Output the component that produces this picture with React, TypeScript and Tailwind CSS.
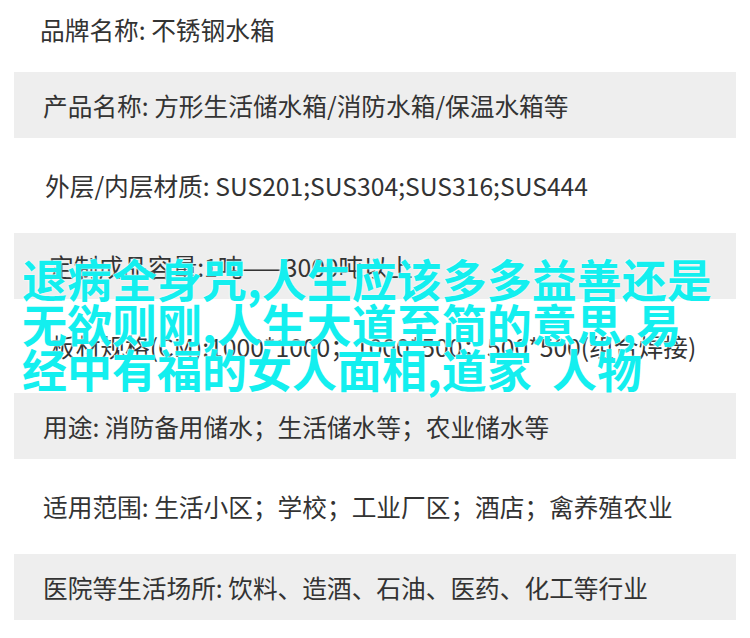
const rows: { text: string; shaded: boolean; indent: string; height: string }[] = [
  { text: "品牌名称: 不锈钢水箱", shaded: false, indent: "pl-[26px]", height: "h-[58px]" },
  { text: "产品名称: 方形生活储水箱/消防水箱/保温水箱等", shaded: true, indent: "pl-[29px]", height: "h-[66px]" },
  { text: "外层/内层材质: SUS201;SUS304;SUS316;SUS444", shaded: false, indent: "pl-[31px]", height: "h-[66px]" },
  { text: "定制成品容量:1吨——3000吨以上", shaded: true, indent: "pl-[35px]", height: "h-[66px]" },
  { text: "板材规格(CM):1000*1000；1000*500；500*500(组合焊接)", shaded: false, indent: "pl-[37px]", height: "h-[66px]" },
  { text: "用途: 消防备用储水；生活储水等；农业储水等", shaded: true, indent: "pl-[29px]", height: "h-[66px]" },
  { text: "适用范围: 生活小区；学校；工业厂区；酒店；禽养殖农业", shaded: false, indent: "pl-[29px]", height: "h-[66px]" },
  { text: "医院等生活场所: 饮料、造酒、石油、医药、化工等行业", shaded: true, indent: "pl-[29px]", height: "h-[66px]" },
];

const overlayLines = [
  "退病全身咒,人生应该多多益善还是",
  "无欲则刚,人生大道至简的意思,易",
  "经中有福的女人面相,道家  人物",
];

export default function App() {
  return (
    <div className="relative h-[638px] w-[750px] overflow-hidden bg-white font-['Noto_Sans_CJK_SC','Noto_Sans',sans-serif]">
      <div className="flex flex-col gap-[14.3px]">
        {rows.map((row) => (
          <div
            key={row.text}
            className={`mx-[14px] flex items-center ${row.height} ${row.indent} ${row.shaded ? "bg-[#eeeeee]" : "bg-white"}`}
          >
            <span className="whitespace-nowrap text-[24.7px] leading-none text-[#333333]">{row.text}</span>
          </div>
        ))}
      </div>

      {/* headline laid over rows 4-5 */}
      <div className="absolute left-[22px] top-[256px] text-[45px] font-bold leading-[45px] text-[#13efef] [text-shadow:0_0_1px_#fff,0_0_2px_#fff]">
        {overlayLines.map((line) => (
          <div key={line} className="whitespace-pre">
            {line}
          </div>
        ))}
      </div>
    </div>
  );
}
